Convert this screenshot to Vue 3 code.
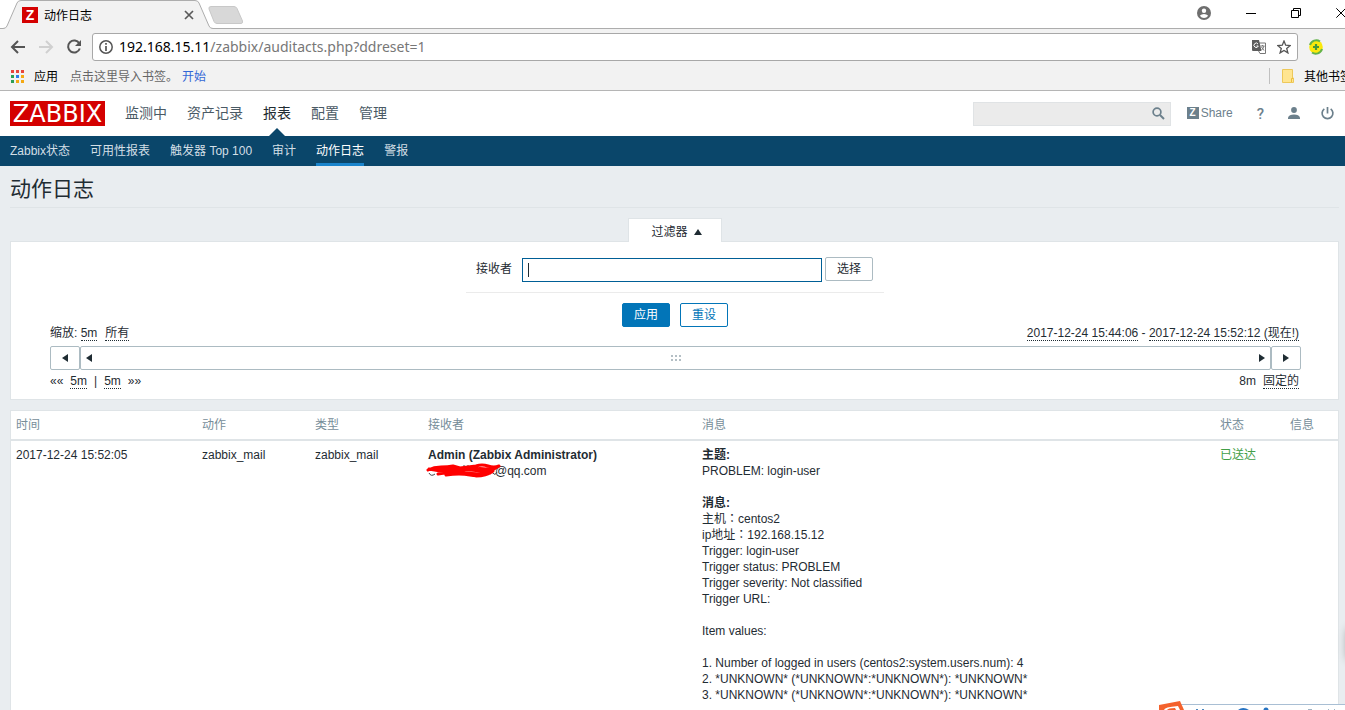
<script setup>
import { ref, onMounted } from 'vue'

const mainMenu = ['监测中', '资产记录', '报表', '配置', '管理']
const subMenu = ['Zabbix状态', '可用性报表', '触发器 Top 100', '审计', '动作日志', '警报']
const headers = ['时间', '动作', '类型', '接收者', '消息', '状态', '信息']
const appDots = ['#e8453c', '#e8453c', '#e8453c', '#2c9f55', '#2b7de9', '#f4a913', '#2c9f55', '#f4a913', '#f4a913']
const message = [
  '主机：centos2',
  'ip地址：192.168.15.12',
  'Trigger: login-user',
  'Trigger status: PROBLEM',
  'Trigger severity: Not classified',
  'Trigger URL:',
  '',
  'Item values:',
  '',
  '1. Number of logged in users (centos2:system.users.num): 4',
  '2. *UNKNOWN* (*UNKNOWN*:*UNKNOWN*): *UNKNOWN*',
  '3. *UNKNOWN* (*UNKNOWN*:*UNKNOWN*): *UNKNOWN*',
].join('\n')
const recipient = ref('')
const recipientBox = ref(null)
onMounted(() => recipientBox.value.focus())
</script>

<template>
  <div class="window">
    <header class="browser">
      <div class="titlebar">
        <div class="tab">
          <svg class="tab-shape" width="216" height="29" viewBox="0 0 216 29">
            <path d="M0 29V28.500H3Q6 28.500 7 26L17 3Q18 .5 21 .5H195Q198 .5 199 3L209 26Q210 28.500 213 28.500H216V29Z" fill="#f2f2f2" />
            <path d="M0 28.500H3Q6 28.500 7 26L17 3Q18 .5 21 .5H195Q198 .5 199 3L209 26Q210 28.500 213 28.500H216" fill="none" stroke="#adadad" />
          </svg>
          <span class="favicon">Z</span>
          <span class="tab-title">动作日志</span>
          <button class="plain tab-close" aria-label="关闭标签页">
            <svg width="10" height="10" viewBox="0 0 10 10"><path d="M1 1L9 9M9 1L1 9" stroke="#5a5a5a" stroke-width="1.7" /></svg>
          </button>
        </div>
        <button class="plain newtab" aria-label="新标签页">
          <svg width="36" height="18" viewBox="0 0 36 18"><path d="M3 .5H26Q28 .5 29 2.500L34.500 15Q35 17.500 33 17.500H9Q7 17.500 6 15.500L1 3Q.3 .5 3 .5Z" fill="#d8d8d8" stroke="#c8c8c8" /></svg>
        </button>
        <div class="win-controls">
          <button class="plain" aria-label="用户">
            <svg width="14" height="14" viewBox="0 0 14 14"><circle cx="7" cy="7" r="7" fill="#6e6e6e" /><circle cx="7" cy="4.700" r="2.200" fill="#fff" /><path d="M2.800 9.800Q4.500 8 7 8T11.200 9.800Q9.500 12 7 12T2.800 9.800Z" fill="#fff" /></svg>
          </button>
          <button class="plain" aria-label="最小化"><svg width="10" height="10" viewBox="0 0 10 10"><path d="M0 5.500H10" stroke="#000" /></svg></button>
          <button class="plain" aria-label="还原"><svg width="10" height="10" viewBox="0 0 10 10"><path d="M.5 2.500H7.500V9.500H.5ZM2.500 2.500V.5H9.500V7.500H7.500" fill="none" stroke="#000" /></svg></button>
          <button class="plain" aria-label="关闭"><svg width="10" height="10" viewBox="0 0 10 10"><path d="M.3 .3L9.700 9.700M9.700 .3L.3 9.700" stroke="#000" /></svg></button>
        </div>
      </div>

      <div class="toolbar">
        <button class="plain" aria-label="后退"><svg width="16" height="14" viewBox="0 0 16 14"><path d="M15 7H2M8 1L2 7L8 13" fill="none" stroke="#555" stroke-width="2" /></svg></button>
        <button class="plain" aria-label="前进"><svg width="16" height="14" viewBox="0 0 16 14"><path d="M1 7H14M8 1L14 7L8 13" fill="none" stroke="#d0d0d0" stroke-width="2" /></svg></button>
        <button class="plain" aria-label="重新加载"><svg width="16" height="16" viewBox="0 0 16 16"><path d="M13.300 4.500A6 6 0 1 0 13.800 9.500" fill="none" stroke="#555" stroke-width="2" /><path d="M15 1V7H9Z" fill="#555" /></svg></button>
        <div class="omnibox">
          <svg width="14" height="14" viewBox="0 0 14 14"><circle cx="7" cy="7" r="6.200" fill="none" stroke="#555" stroke-width="1.500" /><path d="M7 6V11M7 3V4.700" stroke="#555" stroke-width="1.700" /></svg>
          <span class="url">192.168.15.11<span class="path">/zabbix/auditacts.php?ddreset=1</span></span>
          <button class="plain" aria-label="翻译">
            <svg width="14" height="14" viewBox="0 0 14 14"><path d="M6 3H13.500V13.500H8L6 10" fill="#fff" stroke="#777" /><path d="M0 0H7L9.500 11H1Q0 11 0 10Z" fill="#5c5c5c" /><path d="M6 4A2.200 2.200 0 1 0 6.300 6H4.500" fill="none" stroke="#fff" /><path d="M8.500 6H12.500M10.500 5V6M12 6Q11 9 9.500 10M9.500 7L12 10.500" fill="none" stroke="#777" /></svg>
          </button>
          <button class="plain" aria-label="收藏">
            <svg width="14" height="14" viewBox="0 0 14 14"><path d="M7 1L8.700 5.200L13.200 5.500L9.700 8.400L10.900 12.900L7 10.400L3.100 12.900L4.300 8.400L.8 5.500L5.300 5.200Z" fill="none" stroke="#555" stroke-width="1.300" /></svg>
          </button>
        </div>
        <button class="plain extension" aria-label="扩展程序">
          <svg width="16" height="16" viewBox="0 0 16 16"><circle cx="8" cy="8" r="6.800" fill="#fbe90b" /><path d="M2 6A6.500 6.500 0 0 1 12 2.500M14 10A6.500 6.500 0 0 1 4 13.500" fill="none" stroke="#63b34a" stroke-width="2" /><path d="M8 5V11M5 8H11" stroke="#45983b" stroke-width="2.200" /></svg>
        </button>
      </div>

      <nav class="bookmarks" aria-label="书签">
        <svg width="13" height="13" viewBox="0 0 13 13"><rect v-for="(c, i) in appDots" :key="i" :x="(i % 3) * 5" :y="Math.floor(i / 3) * 5" width="3" height="3" :fill="c" /></svg>
        <a href="#" class="apps">应用</a>
        <span class="hint">点击这里导入书签。</span>
        <a href="#" class="start">开始</a>
        <a href="#" class="other">
          <svg width="12" height="14" viewBox="0 0 12 14"><path d="M.5 .5H10.500V9H11.500V13.500H.5Z" fill="#ffe591" stroke="#edc85a" /><path d="M9.500 13V9.500H11" fill="none" stroke="#edbd3b" /></svg>
          <span>其他书签</span>
        </a>
      </nav>
    </header>

    <div class="page">
      <header class="top">
        <a href="#" class="logo">ZABBIX</a>
        <nav class="main-menu">
          <a v-for="m in mainMenu" :key="m" href="#" :class="{ on: m === '报表' }">{{ m }}</a>
        </nav>
        <div class="search">
          <input type="text" aria-label="搜索" />
          <button class="plain" aria-label="搜索"><svg width="13" height="13" viewBox="0 0 13 13"><circle cx="5" cy="5" r="3.900" fill="none" stroke="#6c808c" stroke-width="1.700" /><path d="M8 8L12 12" stroke="#6c808c" stroke-width="2" /></svg></button>
        </div>
        <a href="#" class="share"><span class="z">Z</span>Share</a>
        <a href="#" class="help">?</a>
        <a href="#" class="user" aria-label="用户资料"><svg width="12" height="12" viewBox="0 0 12 12"><circle cx="6" cy="3" r="2.900" fill="#6c808c" /><path d="M0 12V10.500Q1 7.500 6 7.500T12 10.500V12Z" fill="#6c808c" /></svg></a>
        <a href="#" class="power" aria-label="退出"><svg width="13" height="13" viewBox="0 0 13 13"><path d="M3.300 1.900A5.400 5.400 0 1 0 9.700 1.900M6.500 0V6.500" fill="none" stroke="#6c808c" stroke-width="1.700" /></svg></a>
      </header>

      <nav class="sub-menu">
        <a v-for="m in subMenu" :key="m" href="#" :class="{ on: m === '动作日志' }">{{ m }}</a>
      </nav>

      <main>
        <h1>动作日志</h1>

        <div class="tab-row"><button class="filter-tab">过滤器 <svg width="8" height="6" viewBox="0 0 8 6"><path d="M4 0L8 6H0Z" fill="#1f2c33" /></svg></button></div>
        <section class="panel filter">
          <form @submit.prevent>
            <div class="field">
              <label for="recipient">接收者</label>
              <div class="entry">
                <input id="recipient" ref="recipientBox" v-model="recipient" type="text" autocomplete="off" />
                <span v-if="!recipient" class="caret"></span>
              </div>
              <button type="button" class="btn grey">选择</button>
            </div>
            <div class="actions">
              <button class="btn primary">应用</button>
              <button type="reset" class="btn">重设</button>
            </div>
          </form>
          <div class="timeline">
            <div class="line zoom">
              <span>缩放: <a href="#">5m</a></span><a href="#">所有</a>
              <span class="right"><a href="#">2017-12-24 15:44:06</a> - <a href="#">2017-12-24 15:52:12 (现在!)</a></span>
            </div>
            <div class="scroll">
              <button class="arrow" aria-label="向左"><svg width="6" height="8" viewBox="0 0 6 8"><path d="M6 0V8L0 4Z" fill="#1f2c33" /></svg></button>
              <div class="bar">
                <svg width="6" height="8" viewBox="0 0 6 8"><path d="M6 0V8L0 4Z" fill="#1f2c33" /></svg>
                <svg width="10" height="6" viewBox="0 0 10 6"><path d="M0 1H2M4 1H6M8 1H10M0 5H2M4 5H6M8 5H10" stroke="#b4bfc5" stroke-width="2" /></svg>
                <svg width="6" height="8" viewBox="0 0 6 8"><path d="M0 0V8L6 4Z" fill="#1f2c33" /></svg>
              </div>
              <button class="arrow" aria-label="向右"><svg width="6" height="8" viewBox="0 0 6 8"><path d="M0 0V8L6 4Z" fill="#1f2c33" /></svg></button>
            </div>
            <div class="line shift">
              <span>««</span><a href="#">5m</a><span>|</span><a href="#">5m</a><span>»»</span>
              <span class="right">8m</span><a href="#">固定的</a>
            </div>
          </div>
        </section>

        <table class="panel">
          <colgroup><col class="c-time" /><col class="c-act" /><col class="c-act" /><col class="c-rcpt" /><col /><col class="c-status" /><col class="c-info" /></colgroup>
          <thead><tr><th v-for="h in headers" :key="h">{{ h }}</th></tr></thead>
          <tbody>
            <tr>
              <td>2017-12-24 15:52:05</td>
              <td>zabbix_mail</td>
              <td>zabbix_mail</td>
              <td>
                <strong>Admin (Zabbix Administrator)</strong>
                <div class="mail">
                  <svg class="scribble" width="76" height="18" viewBox="0 0 76 18">
                    <path d="M3 11Q5 15 9 12M38 3V5M42 3V5M67 11Q69 14 71 10" fill="none" stroke="#40464a" />
                    <path d="M2 8Q8 5 15 5T27 4L34 6L50 4Q56 2 62 4T73 4L68 7M3 7Q20 11 38 8T66 8M6 7Q24 6 44 8T66 6M12 12Q26 9 40 11T66 10M20 13Q34 11 44 13T64 11M50 14Q60 14 67 9" fill="none" stroke="#f00" stroke-width="3" stroke-linecap="round" stroke-linejoin="round" />
                  </svg>@qq.com
                </div>
              </td>
              <td><strong>主题:</strong><br />PROBLEM: login-user<br /><br /><strong>消息:</strong><div class="message">{{ message }}</div></td>
              <td class="sent">已送达</td>
              <td></td>
            </tr>
          </tbody>
        </table>
      </main>
    </div>

    <div class="edge-shadow"></div>
    <svg class="ime" width="187" height="10" viewBox="0 0 187 10">
      <path d="M20 5H187V10H20Z" fill="#fff" /><path d="M20 4.500H187" stroke="#a9bfd4" />
      <path d="M1 5L22 1L26 10H1Z" fill="#f4622d" /><path d="M6 10Q6 7 20 6L22 10H18L17 8Q10 8 9 10Z" fill="#fff" />
      <path d="M38 9.500H40M44 9.500H46" stroke="#4a86c0" /><path d="M80 10Q85 6 91 10Z" fill="#2673c2" /><circle cx="108" cy="10" r="2.500" fill="#2673c2" /><path d="M150 9.500H154M170 9.500H171M176 9.500H177" stroke="#9fb4c5" />
    </svg>
  </div>
</template>

<style>
body { margin: 0; overflow: hidden; }
</style>

<style scoped>
.window { position: relative; height: 100vh; overflow: hidden; display: flex; flex-direction: column; background: #e9edf0; color: #1f2c33; font: 12px/16px "Liberation Sans", Arial, "Noto Sans CJK SC", sans-serif; }
.window * { box-sizing: border-box; }
button, input { font: inherit; color: inherit; }
a { color: inherit; text-decoration: none; }
svg { display: block; flex: none; }
.plain { border: 0; padding: 0; background: none; display: block; flex: none; }

.browser { flex: none; background: #f2f2f2; border-bottom: 1px solid #b5b5b5; font-family: "Noto Sans CJK SC", sans-serif; }
.titlebar { display: flex; align-items: flex-start; height: 29px; background: #fff; box-shadow: inset 0 -1px #adadad; }
.tab { position: relative; display: flex; align-items: center; width: 216px; height: 29px; padding: 0 22px; gap: 6px; }
.tab-shape { position: absolute; inset: 0; }
.favicon { position: relative; width: 16px; height: 16px; background: #d40000; color: #fff; font: bold 14px/16px "Liberation Sans", sans-serif; text-align: center; }
.tab-title { position: relative; color: #000; }
.tab-close { position: relative; margin-left: auto; }
.newtab { margin: 6px 0 0 -8px; }
.win-controls { margin: 6px -1px 0 auto; display: flex; align-items: center; gap: 35px; }
.toolbar { display: flex; align-items: center; height: 35px; padding: 0 21px 0 10px; gap: 12px; }
.omnibox { flex: 1; display: flex; align-items: center; height: 28px; margin: 0 -2px; padding: 0 6px; gap: 6px; border: 1px solid #a8a8a8; border-radius: 3px; background: #fff; }
.url { flex: 1; font: 14px/20px "Noto Sans", "Open Sans", sans-serif; color: #000; }
.path { color: #777; }
.omnibox button { margin-left: 5px; }
.bookmarks { display: flex; align-items: center; height: 26px; padding: 0 0 2px 11px; color: #000; }
.apps { margin-left: 10px; }
.hint { margin-left: 12px; color: #666; }
.start { margin-left: 4px; color: #3367d6; }
.other { display: flex; align-items: center; gap: 10px; width: 76px; height: 16px; margin-left: auto; padding-left: 12px; border-left: 1px solid #c0c0c0; white-space: nowrap; }

.page { flex: 1; min-height: 0; overflow: hidden; }
.top { display: flex; align-items: center; height: 45px; padding: 0 11px 0 10px; background: #fff; color: #6c808c; }
.logo { width: 95px; height: 25px; background: #d40000; color: #fff; font: 24px/27px "DejaVu Sans", sans-serif; text-align: center; }
.main-menu { display: flex; gap: 20px; margin-left: 20px; font-size: 14px; line-height: 45px; color: #4a5a65; }
.main-menu a { position: relative; }
.main-menu .on { color: #1f2c33; }
.main-menu .on::after { content: ""; position: absolute; left: 50%; bottom: 0; margin-left: -8px; border: 8px solid transparent; border-top: 0; border-bottom-color: #0a466a; }
.search { display: flex; align-items: center; width: 198px; height: 24px; margin-left: auto; padding-right: 5px; background: #ebebeb; border: 1px solid #e0e3e5; }
.search input { flex: 1; min-width: 0; border: 0; background: none; outline: 0; }
.share { display: flex; align-items: center; gap: 2px; margin-left: 16px; padding-bottom: 2px; }
.z { width: 12px; height: 12px; background: #6c808c; color: #fff; font-size: 10px; font-weight: bold; line-height: 12px; text-align: center; }
.help { margin-left: 24px; font: 500 15px/16px Roboto, sans-serif; }
.user { margin-left: 24px; padding-bottom: 2px; }
.power { margin-left: 21px; padding-bottom: 1px; }
.sub-menu { display: flex; gap: 20px; height: 30px; padding: 0 10px; background: #0a466a; color: #d3dfe6; line-height: 30px; }
.sub-menu .on { color: #fff; border-bottom: 3px solid #1a84cc; }

main { padding: 0 6px 0 10px; }
h1 { margin: 0; height: 42px; border-bottom: 1px solid #dfe4e7; font-size: 21px; font-weight: 400; line-height: 46px; }
.panel { background: #fff; border: 1px solid #dfe4e7; }
.tab-row { display: flex; justify-content: center; margin-top: 10px; }
.filter-tab { position: relative; display: flex; align-items: center; justify-content: center; gap: 6px; width: 94px; height: 24px; margin-bottom: -1px; padding: 2px 0 0 4px; border: 1px solid #dfe4e7; border-bottom: 0; background: #fff; }
.filter { height: 159px; padding: 15px 38px 0 39px; }
form { width: 418px; margin: 0 auto; }
.field { display: flex; height: 36px; padding: 0 10px; border-bottom: 1px solid #ebebeb; }
.field label { margin-right: 10px; line-height: 24px; }
.entry { position: relative; width: 300px; height: 24px; margin-top: 1px; }
.entry input { display: block; width: 100%; height: 24px; padding: 0 5px; border: 1px solid #005f96; outline: 0; caret-color: transparent; }
.caret { position: absolute; left: 6px; top: 5px; width: 1px; height: 14px; background: #1f2c33; }
.btn { width: 48px; height: 24px; padding: 0; border: 1px solid #0275b8; border-radius: 2px; background: #fff; color: #0275b8; line-height: 22px; }
.grey { margin-left: 3px; border-color: #acbbc2; color: #1f2c33; }
.primary { background: #0275b8; color: #fff; }
.actions { display: flex; justify-content: center; gap: 10px; padding-top: 10px; }
.line { display: flex; gap: 8px; height: 16px; padding-right: 1px; }
.line a { display: inline-block; height: 16px; border-bottom: 1px dotted #1f2c33; }
.line .right { margin-left: auto; }
.zoom { margin-top: -2px; }
.shift { gap: 7px; }
.scroll { display: flex; height: 24px; margin: 5px -1px 3px 0; }
.arrow { display: flex; align-items: center; justify-content: center; width: 30px; height: 24px; padding: 0; border: 1px solid #acbbc2; border-radius: 2px; background: #fff; }
.bar { flex: 1; display: flex; align-items: center; justify-content: space-between; padding: 0 5px; border: 1px solid #acbbc2; border-radius: 2px; }

table { width: 100%; margin-top: 10px; table-layout: fixed; border-collapse: separate; border-spacing: 0; }
.c-time { width: 186px; }
.c-act { width: 113px; }
.c-rcpt { width: 274px; }
.c-status { width: 70px; }
.c-info { width: 53px; }
th { height: 30px; padding: 0 5px; border-bottom: 2px solid #dfe4e7; color: #768d99; font-weight: 400; text-align: left; }
td { padding: 6px 5px 20px; vertical-align: top; }
.mail { position: relative; padding-left: 67px; }
.scribble { position: absolute; left: -2px; top: -1px; }
.message { white-space: pre-wrap; font-family: "Liberation Sans", Arial, "Noto Sans CJK TC", sans-serif; }
.sent { color: #429e47; }
.edge-shadow { position: absolute; right: -12px; top: 628px; width: 10px; height: 32px; border-radius: 8px; box-shadow: 0 0 8px #999; }
.ime { position: absolute; right: 0; bottom: 0; }
</style>
